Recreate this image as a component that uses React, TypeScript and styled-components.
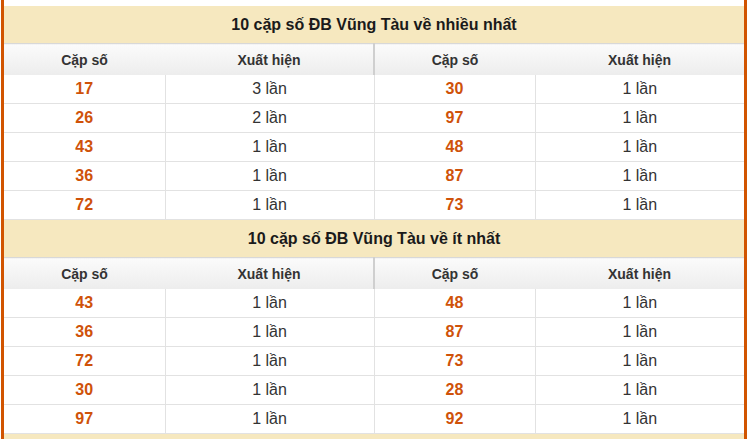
import React from 'react'
import styled, { createGlobalStyle } from 'styled-components'

const GlobalStyle = createGlobalStyle`
  html, body {
    margin: 0;
    padding: 0;
    background: #fff;
    font-family: "Liberation Sans", Arial, sans-serif;
  }
`

const most = [
  ['17', '3 lần', '30', '1 lần'],
  ['26', '2 lần', '97', '1 lần'],
  ['43', '1 lần', '48', '1 lần'],
  ['36', '1 lần', '87', '1 lần'],
  ['72', '1 lần', '73', '1 lần']
]

const least = [
  ['43', '1 lần', '48', '1 lần'],
  ['36', '1 lần', '87', '1 lần'],
  ['72', '1 lần', '73', '1 lần'],
  ['30', '1 lần', '28', '1 lần'],
  ['97', '1 lần', '92', '1 lần']
]

const StatTable = ({ title, rows }: { title: string; rows: string[][] }) => {
  return (
    <Table>
      <colgroup>
        <col style={{ width: 161 }} />
        <col style={{ width: 209 }} />
        <col style={{ width: 161 }} />
        <col style={{ width: 209 }} />
      </colgroup>
      <thead>
        <tr>
          <Title colSpan={4}>{title}</Title>
        </tr>
        <tr>
          <Head>Cặp số</Head>
          <Head>Xuất hiện</Head>
          <Head $split>Cặp số</Head>
          <Head>Xuất hiện</Head>
        </tr>
      </thead>
      <tbody>
        {rows.map((r, i) => (
          <tr key={i}>
            <Num>{r[0]}</Num>
            <Count>{r[1]}</Count>
            <Num>{r[2]}</Num>
            <Count>{r[3]}</Count>
          </tr>
        ))}
      </tbody>
    </Table>
  )
}

const App = () => {
  return (
    <>
      <GlobalStyle />
      <Wrapper>
        <StatTable title="10 cặp số ĐB Vũng Tàu về nhiều nhất" rows={most} />
        <StatTable title="10 cặp số ĐB Vũng Tàu về ít nhất" rows={least} />
        <Footer />
      </Wrapper>
    </>
  )
}

const Wrapper = styled.div`
  margin-left: 1px;
  width: 740px;
  height: 439px;
  overflow: hidden;
  padding-top: 6px;
  box-sizing: content-box;
  border-left: 3px solid #d15400;
  border-right: 3px solid #d15400;
`

const Table = styled.table`
  width: 740px;
  border-collapse: collapse;
  table-layout: fixed;
`

const Title = styled.th`
  height: 37px;
  padding: 0;
  background: #f6e8bf;
  border-bottom: 1px solid #d8d8d8;
  font-size: 16px;
  font-weight: 700;
  color: #1a1a1a;
  text-align: center;
`

const Head = styled.th<{ $split?: boolean }>`
  height: 31px;
  padding: 0;
  background: linear-gradient(#fbfbfb, #ececec);
  border-left: ${(p) => (p.$split ? '2px solid #cfcfcf' : 'none')};
  font-size: 14px;
  font-weight: 700;
  color: #333;
  text-align: center;
`

const Cell = styled.td`
  height: 28px;
  padding: 0;
  border-bottom: 1px solid #e2e2e2;
  border-left: 1px solid #e2e2e2;
  text-align: center;
  font-size: 16px;
  &:first-child {
    border-left: none;
  }
`

const Num = styled(Cell)`
  font-weight: 700;
  color: #cf5209;
`

const Count = styled(Cell)`
  color: #333;
`

const Footer = styled.div`
  height: 20px;
  background: #f6e8bf;
`

export default App
